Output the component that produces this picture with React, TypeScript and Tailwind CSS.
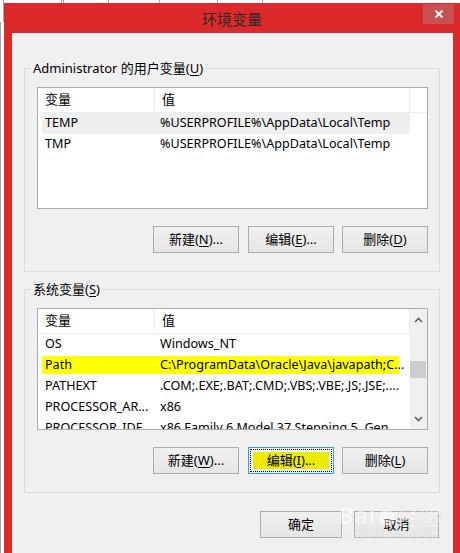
import React from "react";

const FONT = "font-['Noto_Sans','Noto_Sans_CJK_SC',sans-serif]";

function U({ c }: { c: string }) {
  return <span className="underline underline-offset-[2px] decoration-[1px]">{c}</span>;
}

function Btn({ children, w = "w-[86px]" }: { children: React.ReactNode; w?: string }) {
  return (
    <div
      className={`${w} h-[27px] shrink-0 flex items-center justify-center border border-[#adadad] bg-gradient-to-b from-[#f0f0f0] to-[#e5e5e5] text-[13px] leading-none text-black`}
    >
      {children}
    </div>
  );
}

function FocusBtn({ children }: { children: React.ReactNode }) {
  return (
    <div className="w-[86px] h-[27px] shrink-0 flex border border-[#3399ff] bg-[#eef5fc] p-[1px]">
      <div className="flex-1 flex items-center justify-center border border-dotted border-black">
        <div className="w-[76px] h-[17px] bg-[#ecec00] flex items-center justify-center text-[13px] leading-none text-black">
          {children}
        </div>
      </div>
    </div>
  );
}

type Row = { name: string; value: string; mark?: boolean; sel?: boolean };

function Chevron({ up }: { up?: boolean }) {
  return (
    <svg width="9" height="6" viewBox="0 0 9 6">
      {up ? (
        <path d="M1 5 L4.5 1.5 L8 5" fill="none" stroke="#606060" strokeWidth="1.6" />
      ) : (
        <path d="M1 1 L4.5 4.5 L8 1" fill="none" stroke="#606060" strokeWidth="1.6" />
      )}
    </svg>
  );
}

function ListBox({ rows, scroll }: { rows: Row[]; scroll?: boolean }) {
  return (
    <div className="w-[391px] h-[122px] border border-[#abadb3] bg-white flex overflow-hidden">
      <div className="flex-1 min-w-0 flex flex-col overflow-hidden">
        <div className="h-[25px] shrink-0 flex border-b border-[#e8edf3] text-[13px] text-black">
          <div className="w-[117px] shrink-0 pl-[7px] flex items-center border-r border-[#e8edf3]">变量</div>
          <div className="w-[255px] shrink-0 pl-[7px] flex items-center border-r border-[#e8edf3]">值</div>
        </div>
        {rows.map((r, i) => (
          <div key={i} className="h-[21px] shrink-0 flex items-start">
            <div
              className={`ml-[4px] shrink-0 flex text-[12.6px] text-black whitespace-nowrap ${
                r.sel
                  ? "w-[368px] bg-[#efefef] h-[21px] items-center overflow-hidden"
                  : r.mark
                  ? "w-[357px] bg-[#ffff00] h-[18px] mt-[1px] items-center overflow-visible"
                  : "w-[368px] h-[21px] items-center overflow-hidden"
              }`}
            >
              <div className="w-[113px] shrink-0 pl-[3px] overflow-hidden">{r.name}</div>
              <div className="pl-[5px] shrink-0">{r.value}</div>
            </div>
          </div>
        ))}
      </div>
      {scroll && (
        <div className="w-[17px] shrink-0 bg-[#f0f0f0] flex flex-col">
          <div className="h-[19px] flex items-center justify-center pt-[2px]">
            <Chevron up />
          </div>
          <div className="flex-1 flex flex-col">
            <div className="h-[33px]" />
            <div className="h-[17px] mr-[1px] bg-[#cdcdcd]" />
          </div>
          <div className="h-[19px] flex items-center justify-center pb-[2px]">
            <Chevron />
          </div>
        </div>
      )}
    </div>
  );
}

function Group({
  label,
  children,
  mt,
}: {
  label: React.ReactNode;
  children: React.ReactNode;
  mt: string;
}) {
  return (
    <fieldset className={`${mt} ml-[12px] w-[416px] border border-[#dcdcdc] pt-[11px] pl-[12px] pr-[11px] pb-[18px]`}>
      <legend className="-ml-[6px] px-[2px] text-[13px] leading-[16px] text-black">{label}</legend>
      {children}
    </fieldset>
  );
}

export default function App() {
  const userRows: Row[] = [
    { name: "TEMP", value: "%USERPROFILE%\\AppData\\Local\\Temp", sel: true },
    { name: "TMP", value: "%USERPROFILE%\\AppData\\Local\\Temp" },
  ];
  const sysRows: Row[] = [
    { name: "OS", value: "Windows_NT" },
    { name: "Path", value: "C:\\ProgramData\\Oracle\\Java\\javapath;C...", mark: true },
    { name: "PATHEXT", value: ".COM;.EXE;.BAT;.CMD;.VBS;.VBE;.JS;.JSE;...." },
    { name: "PROCESSOR_AR...", value: "x86" },
    { name: "PROCESSOR_IDE...", value: "x86 Family 6 Model 37 Stepping 5, Gen..." },
  ];

  return (
    <div className={`relative w-[460px] h-[553px] overflow-hidden bg-white flex flex-col ${FONT}`}>
      {/* strip of windows behind */}
      <div className="h-[3px] shrink-0 flex bg-white">
        <div className="w-[3px]" />
        <div className="w-[59px] border-l border-r border-[#a8a8a8]" />
        <div className="w-[1px]" />
        <div className="w-[46px] border-l border-r border-[#a8a8a8]" />
        <div className="w-[50px]" />
        <div className="w-[59px] border-l border-r border-[#a8a8a8]" />
        <div className="w-[45px] border-r border-[#a8a8a8]" />
      </div>
      <div className="flex flex-1 min-h-0">
        <div className="w-[4px] shrink-0 flex flex-col bg-white">
          <div className="h-[19px] border-r border-[#a8a8a8]" />
          <div className="flex-1 border-l border-[#a8a8a8]" />
        </div>
        <div className="flex-1 bg-[#dc2a2a] flex flex-col">
          {/* title bar */}
          <div className="h-[30px] shrink-0 grid grid-cols-[1fr_auto_1fr]">
            <div />
            <div className="flex items-center pt-[2px] text-[15px] text-[#2b2b2b]">环境变量</div>
            <div className="flex justify-end items-start">
              <div className="mt-[1px] mr-[6px] w-[31px] h-[20px] bg-[#c75050] flex items-center justify-center">
                <svg width="10" height="10" viewBox="0 0 10 10">
                  <path d="M1.5 1.5 L8.5 8.5 M8.5 1.5 L1.5 8.5" stroke="#ffffff" strokeWidth="1.8" />
                </svg>
              </div>
            </div>
          </div>
          {/* client area */}
          <div className="flex-1 ml-[8px] mr-[7px] bg-[#f0f0f0] flex flex-col">
            <Group
              mt="mt-[27px]"
              label={
                <>
                  Administrator 的用户变量(<U c="U" />)
                </>
              }
            >
              <ListBox rows={userRows} />
              <div className="mt-[17px] flex ml-[116px]">
                <Btn>
                  新建(<U c="N" />)...
                </Btn>
                <div className="ml-[9px]">
                  <Btn>
                    编辑(<U c="E" />)...
                  </Btn>
                </div>
                <div className="ml-[8px]">
                  <Btn>
                    删除(<U c="D" />)
                  </Btn>
                </div>
              </div>
            </Group>
            <Group
              mt="mt-[9px]"
              label={
                <>
                  系统变量(<U c="S" />)
                </>
              }
            >
              <ListBox rows={sysRows} scroll />
              <div className="mt-[17px] flex ml-[116px]">
                <Btn>
                  新建(<U c="W" />)...
                </Btn>
                <div className="ml-[9px]">
                  <FocusBtn>
                    编辑(<U c="I" />)...
                  </FocusBtn>
                </div>
                <div className="ml-[8px]">
                  <Btn>
                    删除(<U c="L" />)
                  </Btn>
                </div>
              </div>
            </Group>
            <div className="mt-[18px] flex justify-end mr-[14px]">
              <Btn w="w-[82px]">确定</Btn>
              <div className="ml-[12px]">
                <Btn w="w-[85px]">取消</Btn>
              </div>
            </div>
          </div>
        </div>
      </div>
      {/* Baidu watermark */}
      <div className="absolute left-[338px] top-[503px] pointer-events-none select-none flex flex-col items-start opacity-50">
        <div className="flex items-end leading-none">
          <span className="text-[24px] font-bold text-white [text-shadow:0_0_1px_#b0b0b0]">Bai</span>
          <span className="text-[18px] text-white [text-shadow:0_0_1px_#b0b0b0] mx-[2px]">●</span>
          <span className="text-[22px] text-white [text-shadow:0_0_1px_#b0b0b0]">经验</span>
        </div>
        <div className="mt-[2px] text-[12px] leading-none text-white [text-shadow:0_0_1px_#b0b0b0]">jingyan.baidu.com</div>
      </div>
    </div>
  );
}
